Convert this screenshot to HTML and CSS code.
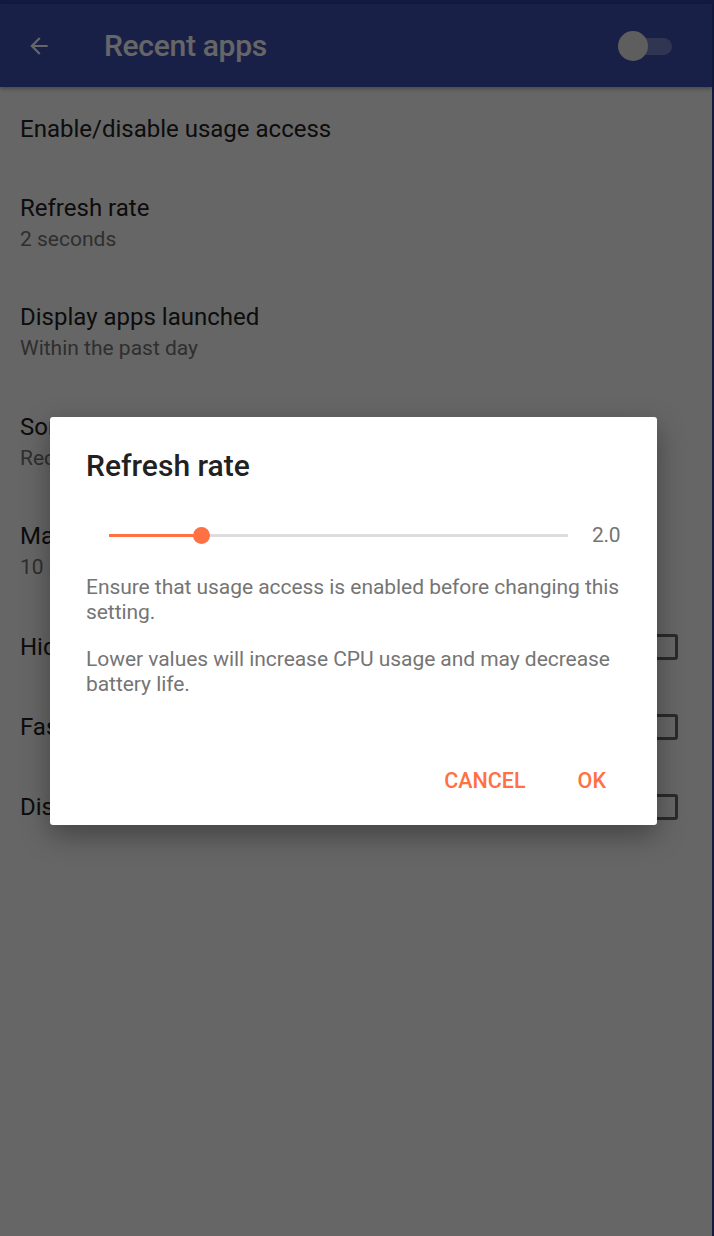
FILE: index.html
```html
<!DOCTYPE html>
<html lang="en">
<head>
<meta charset="utf-8">
<title>Recent apps</title>
<link rel="stylesheet" href="styles.css">
</head>
<body>
<div class="screen">
  <div class="app">
    <div class="statusbar"></div>
    <header class="toolbar">
      <svg class="back" width="24" height="24" viewBox="0 0 24 24"><path d="M20 11H7.83l5.59-5.59L12 4l-8 8 8 8 1.41-1.41L7.83 13H20v-2z" fill="#fff"/></svg>
      <h1 class="title">Recent apps</h1>
      <div class="switch"><div class="track"></div><div class="thumb"></div></div>
    </header>
    <main class="list">
      <div class="item single"><div class="text"><div class="primary">Enable/disable usage access</div></div></div>
      <div class="item double"><div class="text"><div class="primary">Refresh rate</div><div class="secondary">2 seconds</div></div></div>
      <div class="item double"><div class="text"><div class="primary">Display apps launched</div><div class="secondary">Within the past day</div></div></div>
      <div class="item double"><div class="text"><div class="primary">Sort order</div><div class="secondary">Recently used</div></div></div>
      <div class="item double"><div class="text"><div class="primary">Max number of apps</div><div class="secondary">10 apps</div></div></div>
      <div class="item single"><div class="text"><div class="primary">Hide apps</div></div><div class="checkbox"></div></div>
      <div class="item single"><div class="text"><div class="primary">Fast app switching</div></div><div class="checkbox"></div></div>
      <div class="item single"><div class="text"><div class="primary">Display notification icon</div></div><div class="checkbox"></div></div>
    </main>
  </div>
  <div class="edge"></div>
  <div class="scrim"></div>
  <div class="dialog">
    <h2 class="dialog-title">Refresh rate</h2>
    <div class="slider-row">
      <div class="slider">
        <div class="slider-active" style="width: 92px"></div>
        <div class="slider-thumb" style="left: 92px"></div>
      </div>
      <div class="slider-value">2.0</div>
    </div>
    <p class="message">Ensure that usage access is enabled before changing this setting.</p>
    <p class="message">Lower values will increase CPU usage and may decrease battery life.</p>
    <div class="actions">
      <button class="btn">CANCEL</button>
      <button class="btn">OK</button>
    </div>
  </div>
</div>
</body>
</html>
```
FILE: styles.css
```css
html, body {
  margin: 0;
  padding: 0;
}
body {
  font-family: Roboto, "Noto Sans", sans-serif;
  background: #ffffff;
  width: 714px;
  height: 1236px;
  overflow: hidden;
}
.screen {
  position: relative;
  display: flex;
  width: 714px;
  height: 1236px;
}
.app {
  width: 712px;
  display: flex;
  flex-direction: column;
  background: #ffffff;
}
.edge {
  width: 2px;
  background: #303f9f;
}
.statusbar {
  height: 4px;
  background: #303f9f;
}
.toolbar {
  height: 83px;
  background: #3f51b5;
  display: flex;
  align-items: center;
  padding: 0 40px 0 26px;
  box-shadow: 0 2px 4px rgba(0,0,0,0.3);
  position: relative;
  z-index: 1;
}
.back {
  width: 26px;
  height: 26px;
}
.title {
  margin: 0 0 0 52px;
  flex: 1;
  color: #ffffff;
  font-size: 30px;
  font-weight: 500;
  letter-spacing: -0.3px;
}
.switch {
  position: relative;
  width: 54px;
  height: 30px;
}
.track {
  position: absolute;
  left: 8px;
  right: 0;
  top: 7px;
  height: 17px;
  border-radius: 9px;
  background: rgba(255,255,255,0.3);
}
.thumb {
  position: absolute;
  left: 0;
  top: 0;
  width: 30px;
  height: 30px;
  border-radius: 50%;
  background: #ececec;
}
.list {
  padding-top: 2px;
}
.item {
  display: flex;
  align-items: center;
  padding: 0 34px 0 20px;
}
.item.single { height: 80px; }
.item.double { height: 109.5px; }
.text { flex: 1; }
.primary {
  font-size: 24px;
  line-height: 31px;
  color: #212121;
}
.secondary {
  font-size: 21px;
  line-height: 31px;
  color: #757575;
}
.checkbox {
  width: 18px;
  height: 20px;
  border: 3px solid #6a6a6a;
  border-radius: 3px;
}
.scrim {
  position: absolute;
  inset: 0;
  z-index: 2;
  background: rgba(0,0,0,0.6);
}
.dialog {
  position: absolute;
  z-index: 3;
  left: 50px;
  top: 417px;
  width: 607px;
  height: 408px;
  box-sizing: border-box;
  background: #ffffff;
  border-radius: 3px;
  padding: 31px 36px 0 36px;
  box-shadow: 0 10px 28px rgba(0,0,0,0.35);
  display: flex;
  flex-direction: column;
}
.dialog-title {
  margin: 0;
  font-size: 30px;
  line-height: 36px;
  font-weight: 500;
  color: #212121;
}
.slider-row {
  margin-top: 31px;
  height: 40px;
  display: flex;
  align-items: center;
  padding-left: 23px;
}
.slider {
  position: relative;
  width: 459px;
  height: 3px;
  background: #dcdcdc;
}
.slider-active {
  position: absolute;
  left: 0;
  top: 0;
  height: 3px;
  background: #ff7043;
}
.slider-thumb {
  position: absolute;
  top: -7px;
  width: 17px;
  height: 17px;
  margin-left: -8.5px;
  border-radius: 50%;
  background: #ff7043;
}
.slider-value {
  margin-left: 24px;
  font-size: 21px;
  color: #757575;
  letter-spacing: -0.3px;
}
.message {
  margin: 20px 0 0 0;
  font-size: 21px;
  line-height: 25px;
  color: #757575;
  letter-spacing: -0.05px;
}
.message + .message {
  margin-top: 22px;
}
.actions {
  margin-top: auto;
  margin-bottom: 21px;
  display: flex;
  justify-content: flex-end;
  gap: 20px;
  margin-right: -1px;
}
.btn {
  height: 48px;
  padding: 0 16px;
  border: none;
  background: transparent;
  font-family: Roboto, sans-serif;
  font-size: 21.5px;
  font-weight: 500;
  color: #ff7043;
}
```
